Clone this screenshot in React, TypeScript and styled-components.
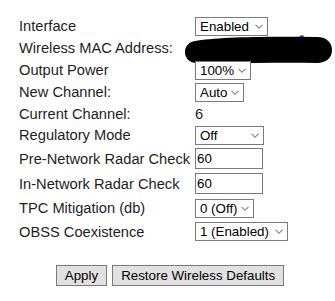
import React from 'react';
import styled, { createGlobalStyle } from 'styled-components';

const GlobalStyle = createGlobalStyle`
    body {
        margin: 0;
        background: #ffffff;
        font-family: "Liberation Sans", Arial, sans-serif;
    }
`;

const Page = styled.div`
    width: 335px;
    height: 301px;
    padding: 15px 0 0 19px;
    box-sizing: border-box;
`;

const Row = styled.div<{ h: number }>`
    display: flex;
    align-items: center;
    height: ${({ h }) => h}px;
`;

const Label = styled.div`
    width: 176px;
    flex: none;
    font-size: 14.67px;
    color: #1e1e1e;
    white-space: nowrap;
`;

const Value = styled.div`
    position: relative;
    font-size: 14.67px;
    color: #1e1e1e;
`;

const SelectWrap = styled.div<{ w: number }>`
    position: relative;
    width: ${({ w }) => w}px;
    height: 19px;
`;

const Select = styled.select`
    appearance: none;
    width: 100%;
    height: 100%;
    margin: 0;
    padding: 0 0 0 4px;
    border: 1px solid #7a7a7a;
    border-radius: 0;
    background: #fff;
    font-family: "Liberation Sans", Arial, sans-serif;
    font-size: 13.33px;
    color: #000;
    outline: none;
`;

const Chevron = styled.svg`
    position: absolute;
    right: 5px;
    top: 7px;
    pointer-events: none;
`;

const TextInput = styled.input`
    width: 68px;
    height: 21px;
    box-sizing: border-box;
    margin: 0;
    padding: 0 1px;
    border: 1px solid #7a7a7a;
    border-radius: 0;
    font-family: "Liberation Sans", Arial, sans-serif;
    font-size: 13.33px;
    color: #000;
    outline: none;
`;

const Redaction = styled.svg`
    position: absolute;
    left: -10px;
    top: -5px;
`;

const Buttons = styled.div`
    display: flex;
    justify-content: center;
    gap: 5px;
    margin: 22px 0 0 -14px;
`;

const Button = styled.button`
    height: 21px;
    padding: 0 8px;
    border: 1px solid #7a7a7a;
    border-radius: 0;
    background: #e1e1e1;
    font-family: "Liberation Sans", Arial, sans-serif;
    font-size: 13.33px;
    color: #000;
`;

type Opt = { w: number; value: string };

const Dropdown = ({ w, value }: Opt) => (
    <SelectWrap w={w}>
        <Select defaultValue={value}>
            <option>{value}</option>
        </Select>
        <Chevron width="8" height="5" viewBox="0 0 8 5">
            <path d="M0.5 0.8 L4 4.2 L7.5 0.8" fill="none" stroke="#8a8a8a" strokeWidth="1.1" />
        </Chevron>
    </SelectWrap>
);

const App = () => {
    return (
        <>
            <GlobalStyle />
            <Page>
                <Row h={22}>
                    <Label>Interface</Label>
                    <Dropdown w={73} value="Enabled" />
                </Row>
                <Row h={22}>
                    <Label>Wireless MAC Address:</Label>
                    <Value>
                        00:00:00:00:00:00
                        <Redaction width="148" height="30" viewBox="0 0 148 30">
                            <path d="M112 3 L117 0 L119 1 L118 6 Z" fill="#7b1fd6" />
                            <path
                                d="M10 6 C30 2 80 1 132 2 C142 2 147 8 147 15 C147 23 141 28 132 28 C90 27 50 29 12 28 C4 28 0 23 0 17 C0 11 4 7 10 6 Z"
                                fill="#000"
                            />
                        </Redaction>
                    </Value>
                </Row>
                <Row h={22}>
                    <Label>Output Power</Label>
                    <Dropdown w={56} value="100%" />
                </Row>
                <Row h={22}>
                    <Label>New Channel:</Label>
                    <Dropdown w={49} value="Auto" />
                </Row>
                <Row h={21}>
                    <Label>Current Channel:</Label>
                    <Value>6</Value>
                </Row>
                <Row h={22}>
                    <Label>Regulatory Mode</Label>
                    <Dropdown w={69} value="Off" />
                </Row>
                <Row h={25}>
                    <Label>Pre-Network Radar Check</Label>
                    <TextInput defaultValue="60" />
                </Row>
                <Row h={25}>
                    <Label>In-Network Radar Check</Label>
                    <TextInput defaultValue="60" />
                </Row>
                <Row h={24}>
                    <Label>TPC Mitigation (db)</Label>
                    <Dropdown w={59} value="0 (Off)" />
                </Row>
                <Row h={23}>
                    <Label>OBSS Coexistence</Label>
                    <Dropdown w={93} value="1 (Enabled)" />
                </Row>
                <Buttons>
                    <Button>Apply</Button>
                    <Button>Restore Wireless Defaults</Button>
                </Buttons>
            </Page>
        </>
    );
};

export default App;
